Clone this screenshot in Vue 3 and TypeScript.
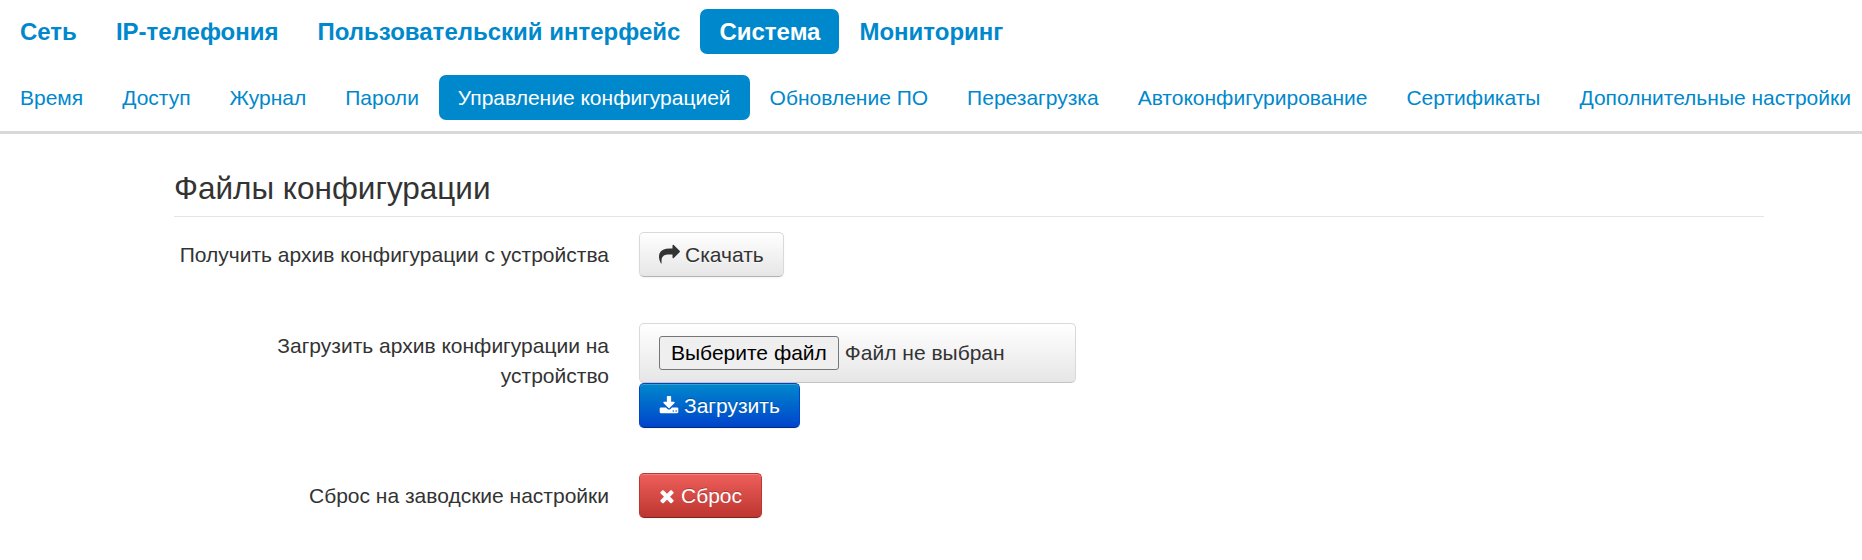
<script setup lang="ts">
const topItems: { label: string; active?: boolean }[] = [
  { label: 'Сеть' },
  { label: 'IP-телефония' },
  { label: 'Пользовательский интерфейс' },
  { label: 'Система', active: true },
  { label: 'Мониторинг' },
]
const subItems: { label: string; active?: boolean }[] = [
  { label: 'Время' },
  { label: 'Доступ' },
  { label: 'Журнал' },
  { label: 'Пароли' },
  { label: 'Управление конфигурацией', active: true },
  { label: 'Обновление ПО' },
  { label: 'Перезагрузка' },
  { label: 'Автоконфигурирование' },
  { label: 'Сертификаты' },
  { label: 'Дополнительные настройки' },
]
</script>

<template>
  <div class="page">
    <nav class="top-nav">
      <a v-for="item in topItems" :key="item.label" class="top-pill" :class="{ active: item.active }">{{ item.label }}</a>
    </nav>
    <nav class="sub-nav">
      <a v-for="item in subItems" :key="item.label" class="sub-pill" :class="{ active: item.active }">{{ item.label }}</a>
    </nav>
    <main class="content">
      <h2 class="title">Файлы конфигурации</h2>

      <div class="row row-download">
        <div class="label">Получить архив конфигурации с устройства</div>
        <div class="control">
          <button class="btn btn-default" type="button">
            <svg class="icon icon-share" viewBox="0 0 1792 1792" aria-hidden="true">
              <path d="M1792 640q0 26-19 45l-512 512q-19 19-45 19t-45-19-19-45v-256h-224q-98 0-175.5 6t-154 21.5-133 42.5-105.5 69.5-80 101-48.5 138.5-17.5 181q0 55 5 123 0 6 2.5 23.5t2.5 26.5q0 15-8.5 25t-23.5 10q-16 0-28-17-7-9-13-22t-13.5-30-10.5-24q-127-285-127-451 0-199 53-333 162-403 875-403h224v-256q0-26 19-45t45-19 45 19l512 512q19 19 19 45z" />
            </svg>
            Скачать
          </button>
        </div>
      </div>

      <div class="row row-upload">
        <div class="label">Загрузить архив конфигурации на устройство</div>
        <div class="control">
          <div class="file-box">
            <button class="file-btn" type="button">Выберите файл</button>
            <span class="file-name">Файл не выбран</span>
          </div>
          <button class="btn btn-primary" type="button">
            <svg class="icon icon-download" viewBox="0 0 1792 1792" aria-hidden="true">
              <path d="M1344 1344q0-26-19-45t-45-19-45 19-19 45 19 45 45 19 45-19 19-45zm256 0q0-26-19-45t-45-19-45 19-19 45 19 45 45 19 45-19 19-45zm128-224v320q0 40-28 68t-68 28h-1472q-40 0-68-28t-28-68v-320q0-40 28-68t68-28h465l135 136q58 56 136 56t136-56l136-136h464q40 0 68 28t28 68zm-325-569q17 41-14 70l-448 448q-18 19-45 19t-45-19l-448-448q-31-29-14-70 17-39 59-39h256v-448q0-26 19-45t45-19h256q26 0 45 19t19 45v448h256q42 0 59 39z" />
            </svg>
            Загрузить
          </button>
        </div>
      </div>

      <div class="row row-reset">
        <div class="label">Сброс на заводские настройки</div>
        <div class="control">
          <button class="btn btn-danger" type="button">
            <svg class="icon icon-times" viewBox="0 0 1408 1792" aria-hidden="true">
              <path d="M1298 1322q0 40-28 68l-136 136q-28 28-68 28t-68-28l-294-294-294 294q-28 28-68 28t-68-28l-136-136q-28-28-28-68t28-68l294-294-294-294q-28-28-28-68t28-68l136-136q28-28 68-28t68 28l294 294 294-294q28-28 68-28t68 28l136 136q28 28 28 68t-28 68l-294 294 294 294q28 28 28 68z" />
            </svg>
            Сброс
          </button>
        </div>
      </div>
    </main>
  </div>
</template>

<style>
html,
body {
  margin: 0;
  background: #fff;
}
</style>

<style scoped>
.page {
  height: 560px;
  overflow: hidden;
  font-family: "Liberation Sans", Arial, sans-serif;
  color: #333;
  background: #fff;
}
.top-nav {
  display: flex;
  gap: 1px;
  padding: 9px 0 0 1px;
}
.top-pill {
  padding: 0 19px;
  height: 45px;
  line-height: 45px;
  font-size: 24px;
  font-weight: 700;
  color: #0088cc;
  border-radius: 7px;
  white-space: nowrap;
}
.top-pill.active,
.sub-pill.active {
  background: #0088cc;
  color: #fff;
}
.sub-nav {
  display: flex;
  gap: 1px;
  padding: 21px 0 11px 1px;
  border-bottom: 3px solid #d9d9d9;
}
.sub-pill {
  padding: 0 19px;
  height: 45px;
  line-height: 45px;
  font-size: 21px;
  color: #0088cc;
  border-radius: 7px;
  white-space: nowrap;
}
.content {
  width: 1590px;
  margin-left: 174px;
}
.title {
  margin: 0;
  padding: 36px 0 10px;
  font-size: 31.5px;
  line-height: 36px;
  font-weight: 400;
  color: #333;
  border-bottom: 1px solid #e5e5e5;
}
.row {
  display: flex;
  gap: 30px;
}
.row-download {
  margin-top: 15px;
}
.row-upload {
  margin-top: 46px;
}
.row-reset {
  margin-top: 45px;
}
.label {
  width: 435px;
  flex: none;
  text-align: right;
  font-size: 21px;
  line-height: 30px;
  padding-top: 8px;
  color: #333;
}
.control {
  display: flex;
  flex-direction: column;
  align-items: flex-start;
}
.btn {
  display: inline-flex;
  align-items: center;
  height: 45px;
  padding: 0 19px;
  box-sizing: border-box;
  font-family: inherit;
  font-size: 21px;
  border-radius: 5px;
  border: 1px solid #ccc;
  white-space: nowrap;
  box-shadow: inset 0 1px 0 rgba(255, 255, 255, 0.2), 0 1px 2px rgba(0, 0, 0, 0.05);
}
.btn-default {
  color: #333;
  background: linear-gradient(#ffffff, #e6e6e6);
  border-color: #d9d9d9 #d9d9d9 #b3b3b3;
  text-shadow: 0 1px 1px rgba(255, 255, 255, 0.75);
}
.btn-primary {
  color: #fff;
  background: linear-gradient(#0088cc, #0044cc);
  border-color: #0044cc #0044cc #002a80;
  text-shadow: 0 -1px 0 rgba(0, 0, 0, 0.25);
}
.btn-danger {
  color: #fff;
  background: linear-gradient(#ee5f5b, #bd362f);
  border-color: #bd362f #bd362f #802420;
  text-shadow: 0 -1px 0 rgba(0, 0, 0, 0.25);
}
.icon {
  flex: none;
  fill: currentColor;
  margin-right: 5px;
}
.icon-share {
  width: 21px;
  height: 21px;
}
.icon-download {
  width: 20px;
  height: 20px;
}
.icon-times {
  width: 16px;
  height: 20px;
  margin-right: 6px;
}
.file-box {
  display: flex;
  align-items: center;
  box-sizing: border-box;
  width: 437px;
  height: 60px;
  padding: 0 19px;
  border: 1px solid #d9d9d9;
  border-bottom-color: #c4c4c4;
  border-radius: 5px;
  background: linear-gradient(#ffffff, #e6e6e6);
}
.file-btn {
  height: 34px;
  padding: 0 11px;
  box-sizing: border-box;
  font-family: inherit;
  font-size: 21px;
  color: #000;
  background: #efefef;
  border: 1px solid #767676;
  border-radius: 3px;
}
.file-name {
  margin-left: 6px;
  font-size: 21px;
  color: #333;
}
</style>
